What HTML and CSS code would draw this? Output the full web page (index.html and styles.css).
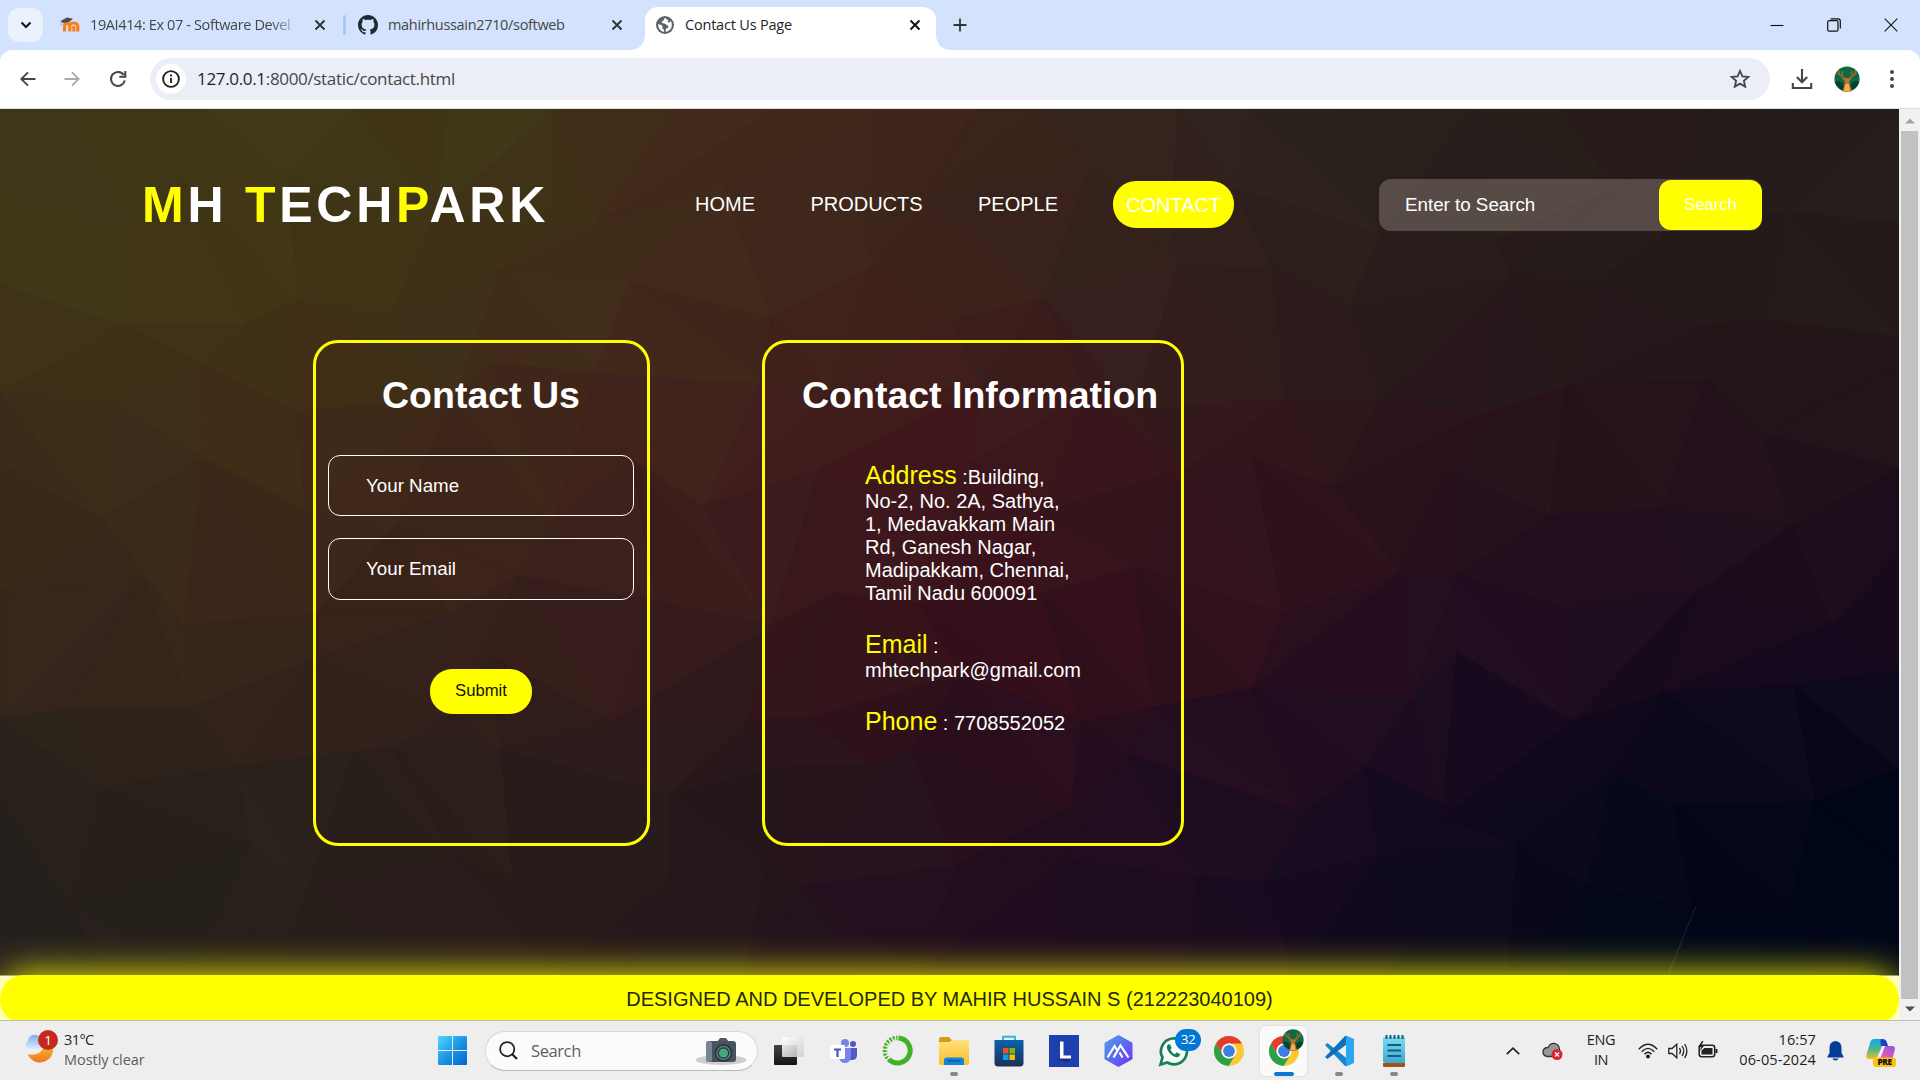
FILE: index.html
```html
<!DOCTYPE html>
<html lang="en">
<head>
<meta charset="utf-8">
<title>Contact Us Page</title>
<link rel="stylesheet" href="styles.css">
</head>
<body>
<svg class="defs" width="0" height="0" aria-hidden="true">
  <defs>
    <linearGradient id="win" x1="0" y1="0" x2="1" y2="1"><stop offset="0" stop-color="#4fd8ff"/><stop offset=".55" stop-color="#1a90e2"/><stop offset="1" stop-color="#0067cc"/></linearGradient>
    <linearGradient id="moon" x1="0" y1="0" x2="0" y2="1"><stop offset="0" stop-color="#f5c030"/><stop offset="1" stop-color="#ee7420"/></linearGradient>
    <linearGradient id="cloud" x1="0" y1="0" x2="0" y2="1"><stop offset="0" stop-color="#84aceb"/><stop offset="1" stop-color="#dbe8fb"/></linearGradient>
    <linearGradient id="folder" x1="0" y1="0" x2="0" y2="1"><stop offset="0" stop-color="#ffe07a"/><stop offset="1" stop-color="#fcbf2c"/></linearGradient>
    <linearGradient id="store" x1="0" y1="0" x2="0" y2="1"><stop offset="0" stop-color="#0c62ad"/><stop offset="1" stop-color="#1b3055"/></linearGradient>
    <linearGradient id="hex" x1="0" y1="0" x2="1" y2="1"><stop offset="0" stop-color="#4f9fe6"/><stop offset=".5" stop-color="#5a6cf0"/><stop offset="1" stop-color="#7b2ff5"/></linearGradient>
    <linearGradient id="note" x1="0" y1="0" x2="0" y2="1"><stop offset="0" stop-color="#7bdcf0"/><stop offset="1" stop-color="#3aa9d2"/></linearGradient>
    <linearGradient id="pilotA" x1="0" y1="0" x2="0" y2="1"><stop offset="0" stop-color="#18a5f0"/><stop offset=".5" stop-color="#45b88f"/><stop offset="1" stop-color="#f2c01c"/></linearGradient>
    <linearGradient id="pilotB" x1="1" y1="0" x2="0" y2="1"><stop offset="0" stop-color="#8f50e8"/><stop offset=".6" stop-color="#e65fae"/><stop offset="1" stop-color="#fa8a58"/></linearGradient>
    <linearGradient id="dark" x1="0" y1="0" x2="0" y2="1"><stop offset="0" stop-color="#454442"/><stop offset="1" stop-color="#141414"/></linearGradient>
    <linearGradient id="light" x1="0" y1="0" x2="1" y2="1"><stop offset="0" stop-color="#fff" stop-opacity=".95"/><stop offset="1" stop-color="#ccc" stop-opacity=".8"/></linearGradient>
    <symbol id="close" viewBox="0 0 12 12"><path d="M1.5 1.5l9 9M10.5 1.5l-9 9" fill="none" stroke="currentColor" stroke-width="1.9"/></symbol>
    <symbol id="chrome" viewBox="0 0 30 32">
      <circle cx="15" cy="16" r="15" fill="#fcc934"/>
      <path d="M2 8.5A15 15 0 0 1 28 8.5H15A7.5 7.5 0 0 0 8.5 19.8Z" fill="#e33b2e"/>
      <path d="M2 8.5A15 15 0 0 0 14.5 31L21.5 19.8A7.5 7.5 0 0 1 8.5 19.8Z" fill="#2aa04a"/>
      <circle cx="15" cy="16" r="7.5" fill="#fff"/><circle cx="15" cy="16" r="5.9" fill="#3f7de8"/>
    </symbol>
    <symbol id="deer" viewBox="0 0 26 26">
      <circle cx="13" cy="13" r="12.6" fill="#0d6b42"/>
      <path d="M1 16Q6 13 9 18L10 25Q3 22 1 16ZM25 16Q20 13 17 18L16 25Q23 22 25 16Z" fill="#063f2b"/>
      <path d="M11.5 12Q5 11 4.500 4M7 9.500Q4 8 3.500 7M8.500 10.800L8 5M14.500 12Q21 11 21.500 4M19 9.500Q22 8 22.500 7M17.500 10.800L18 5" fill="none" stroke="#b5622a" stroke-width="1.200"/>
      <path d="M8 12L11.500 12.500Q13 11.500 14.500 12.500L18 12L15.200 15.200L15.500 18L18 25Q13 26.500 8.500 25L10.700 18L10.800 15.200Z" fill="#c9702c"/>
      <path d="M11.500 18H14.800L16 25.200H10Z" fill="#f1b04c"/>
    </symbol>
  </defs>
</svg>

<header class="tabstrip">
  <div class="tab-search"><svg width="12" height="8" viewBox="0 0 12 8"><path d="M1.500 1.500L6 6l4.500-4.500" fill="none" stroke="#111" stroke-width="2"/></svg></div>
  <div class="tab tab-moodle">
    <svg width="20" height="16" viewBox="0 0 20 16"><path d="M4.500 14.500V9Q4.500 6.500 7 6.500T9.800 9V14.500M9.800 9Q9.800 6 13.500 6Q17.800 6 17.800 9.500V14.500M13.800 14.500V9" fill="none" stroke="#f98012" stroke-width="3.100"/><path d="M.5 4L7 .500L13 1.800L9 5L3 6Z" fill="#4b4b4b"/><path d="M1.300 4.500V9" stroke="#999" stroke-width=".8"/></svg>
    <span class="tab-title fade">19AI414: Ex 07 - Software Devel</span>
    <svg class="x" width="12" height="12"><use href="#close"/></svg>
  </div>
  <div class="divider"></div>
  <div class="tab tab-github">
    <svg width="20" height="20" viewBox="0 0 16 16"><path fill="#24292f" d="M8 0C3.580 0 0 3.580 0 8c0 3.540 2.290 6.530 5.470 7.590.4.070.55-.17.55-.38 0-.19-.01-.82-.01-1.490-2.010.37-2.530-.49-2.690-.94-.09-.23-.48-.94-.82-1.130-.28-.15-.68-.52-.01-.53.63-.01 1.080.58 1.230.82.720 1.210 1.870.87 2.330.66.070-.52.280-.87.510-1.070-1.780-.2-3.640-.89-3.640-3.950 0-.87.310-1.590.82-2.150-.08-.2-.36-1.020.08-2.120 0 0 .67-.21 2.200.82.640-.18 1.320-.27 2-.27s1.360.09 2 .27c1.530-1.040 2.200-.82 2.200-.82.44 1.100.16 1.920.08 2.120.51.560.82 1.270.82 2.150 0 3.070-1.870 3.750-3.650 3.950.29.250.54.730.54 1.480 0 1.070-.01 1.930-.01 2.200 0 .21.15.46.55.38A8.010 8.010 0 0 0 16 8c0-4.420-3.580-8-8-8z"/></svg>
    <span class="tab-title">mahirhussain2710/softweb</span>
    <svg class="x" width="12" height="12"><use href="#close"/></svg>
  </div>
  <div class="tab active">
    <svg width="18" height="18" viewBox="0 0 18 18"><circle cx="9" cy="9" r="9" fill="#5f6368"/><path d="M9.800 1.800Q7.500 2.500 7.800 4.300L5.800 5.500Q5.500 7.500 8 7.600L9.800 8Q10.300 9.600 12.400 9.700L12.200 11.800L9.900 12.700L9.500 15.800Q13.500 15.500 15.500 11.500Q16.500 8 15 5L13 6.800L11.500 5.800L12.600 4L10.400 3.500ZM2 8.200L5 8.800L6.800 10.800L6.200 12.600L8 13.800L7.800 16Q2.300 14.500 2 8.200Z" fill="#fff"/></svg>
    <span class="tab-title">Contact Us Page</span>
    <svg class="x" width="12" height="12"><use href="#close"/></svg>
  </div>
  <svg class="plus" width="14" height="14" viewBox="0 0 14 14"><path d="M7 .5v13M.5 7h13" stroke="#333" stroke-width="1.800"/></svg>
  <div class="window-buttons">
    <svg width="14" height="14" viewBox="0 0 14 14"><path d="M.5 7.500h13" stroke="#111" stroke-width="1.100"/></svg>
    <svg width="14" height="14" viewBox="0 0 14 14"><rect x=".7" y="2.700" width="10.300" height="10.500" rx="1.500" fill="none" stroke="#111" stroke-width="1.200"/><path d="M3.500 .8H11Q13.300 .8 13.300 3V10.500" fill="none" stroke="#111" stroke-width="1.200"/></svg>
    <svg width="14" height="14" viewBox="0 0 14 14"><path d="M.7 .7l12.600 12.600M13.300 .7L.7 13.300" stroke="#111" stroke-width="1.100"/></svg>
  </div>
</header>

<nav class="toolbar">
  <svg width="16" height="16" viewBox="0 0 16 16"><path d="M15.500 8H1.500M8 1.300L1.300 8L8 14.700" fill="none" stroke="#444746" stroke-width="1.900"/></svg>
  <svg width="16" height="16" viewBox="0 0 16 16"><path d="M.5 8h14M8 1.300L14.700 8L8 14.700" fill="none" stroke="#a9abae" stroke-width="1.900"/></svg>
  <svg width="18" height="18" viewBox="0 0 18 18"><path d="M14.800 5A7 7 0 1 0 15.800 10.500M16.300 1V6.800H10.300" fill="none" stroke="#444746" stroke-width="2"/></svg>
  <div class="omnibox">
    <div class="info"><svg width="18" height="18" viewBox="0 0 18 18"><circle cx="9" cy="9" r="7.900" fill="none" stroke="#222" stroke-width="1.900"/><path d="M9 8v5M9 4.500v2" stroke="#222" stroke-width="1.900"/></svg></div>
    <div class="url"><b>127.0.0.1</b>:8000/static/contact.html</div>
    <svg class="star" width="20" height="20" viewBox="0 0 20 20"><path d="M10 1.900L12.400 7.300L18.300 7.900L13.900 11.800L15.200 17.600L10 14.600L4.800 17.600L6.100 11.800L1.700 7.900L7.600 7.300Z" fill="none" stroke="#444746" stroke-width="1.800"/></svg>
  </div>
  <svg class="download" width="22" height="22" viewBox="0 0 22 22"><path d="M11 1v13M5.800 9L11 14.200L16.200 9M1.800 15V20H20.200V15" fill="none" stroke="#444746" stroke-width="2.100"/></svg>
  <svg class="avatar" width="26" height="26"><use href="#deer"/></svg>
  <svg class="dots" width="4" height="18" viewBox="0 0 4 18" fill="#444746"><circle cx="2" cy="2" r="2"/><circle cx="2" cy="9" r="2"/><circle cx="2" cy="16" r="2"/></svg>
</nav>

<div class="viewport">
  <div class="page">
    <main class="hero">
      <svg class="mesh" id="mesh" viewBox="0 0 1899 866" preserveAspectRatio="none"></svg>
      <div class="site-head">
        <h1 class="logo"><i>M</i>H <i>T</i>ECH<i>P</i>ARK</h1>
        <ul class="menu"><li>HOME</li><li>PRODUCTS</li><li>PEOPLE</li><li class="current">CONTACT</li></ul>
        <div class="search"><span>Enter to Search</span><div class="search-btn">Search</div></div>
      </div>
      <div class="cards">
        <section class="card form">
          <h2>Contact Us</h2>
          <div class="field">Your Name</div>
          <div class="field">Your Email</div>
          <div class="submit">Submit</div>
        </section>
        <section class="card details">
          <h2>Contact Information</h2>
          <p><em>Address</em> :Building,<br>No-2, No. 2A, Sathya,<br>1, Medavakkam Main<br>Rd, Ganesh Nagar,<br>Madipakkam, Chennai,<br>Tamil Nadu 600091</p>
          <p><em>Email</em> :<br>mhtechpark@gmail.com</p>
          <p><em>Phone</em> : 7708552052</p>
        </section>
      </div>
    </main>
    <footer class="site-foot">DESIGNED AND DEVELOPED BY MAHIR HUSSAIN S (212223040109)</footer>
  </div>
  <div class="scrollbar">
    <svg width="10" height="6" viewBox="0 0 10 6"><path d="M0 5.500L5 .5l5 5z" fill="#a3a3a3"/></svg>
    <div class="thumb"></div>
    <svg width="10" height="6" viewBox="0 0 10 6"><path d="M0 .5L5 5.500l5-5z" fill="#505050"/></svg>
  </div>
</div>

<div class="taskbar">
  <svg class="weather" width="36" height="36" viewBox="0 0 36 36">
    <path d="M4 25Q14 28 20 18.500L28.500 16Q31 22 26 29Q15 38 6 29Q4.500 27 4 25Z" fill="url(#moon)"/>
    <path d="M4 19.500A4.500 4.500 0 0 1 4 11.500A6.500 6.500 0 0 1 16 9Q20 11 20 15V19.500Z" fill="url(#cloud)"/>
    <circle cx="24" cy="11" r="10" fill="#c42b1c"/><text x="24" y="16" text-anchor="middle" font-family="Open Sans, sans-serif" font-size="13.500" fill="#fff">1</text>
  </svg>
  <div class="forecast"><span class="temp">31°C</span><span class="muted">Mostly clear</span></div>
  <svg class="start" width="29" height="29" viewBox="0 0 29 29"><path fill="url(#win)" d="M1 0H14V14H0V1Q0 0 1 0ZM15 0H28Q29 0 29 1V14H15ZM0 15H14V29H1Q0 29 0 28ZM15 15H29V28Q29 29 28 29H15Z"/></svg>
  <div class="task-search">
    <svg width="19" height="19" viewBox="0 0 19 19"><circle cx="8.200" cy="8.200" r="7.100" fill="none" stroke="#222" stroke-width="1.800"/><path d="M13 13l5 5" stroke="#222" stroke-width="2.300"/></svg>
    <span>Search</span>
    <svg class="camera" width="52" height="30" viewBox="0 0 52 30"><ellipse cx="26" cy="24" rx="25.500" ry="5" fill="#d3ccca"/><path d="M22 6L25 2H31L34 6Z" fill="#4b5a65"/><rect x="11" y="5" width="30" height="21" rx="3" fill="#46545f"/><rect x="11" y="5" width="6" height="21" rx="2.500" fill="#768590"/><circle cx="28.500" cy="17" r="9" fill="#2b3740"/><circle cx="28.500" cy="17" r="7.200" fill="#6a7983"/><circle cx="28.500" cy="17" r="5.800" fill="#163c34"/><circle cx="28.500" cy="17" r="4.600" fill="#46a878"/></svg>
  </div>
  <div class="apps">
    <div class="app"><svg width="30" height="30" viewBox="0 0 30 30"><rect y="9" width="23" height="20" rx="1" fill="url(#dark)"/><rect x="8" y="1" width="22" height="20" rx="1" fill="url(#light)"/></svg></div>
    <div class="app"><svg width="28" height="26" viewBox="0 0 28 26"><circle cx="15" cy="5" r="4" fill="#7b83eb"/><circle cx="23" cy="6" r="3" fill="#5059c9"/><path d="M18 10H27V17Q27 22 22 22H18Z" fill="#5059c9"/><path d="M10 10H21V18Q21 25 15 25T9 18Z" fill="#7b83eb"/><rect y="7" width="15" height="14" rx="1" fill="#fff"/><path d="M4 10.500H11V12.500H8.600V19H6.400V12.500H4Z" fill="#4b53bc"/></svg></div>
    <div class="app"><svg width="31" height="31" viewBox="0 0 31 31"><path d="M15.500 3A12.500 12.500 0 1 1 6 24.500" fill="none" stroke="#43b02a" stroke-width="5"/><path d="M7 25.500A12.500 12.500 0 0 1 14.500 3" fill="none" stroke="#43b02a" stroke-width="4.500" stroke-dasharray="2 1.300"/><path d="M6.500 23.500A11.500 11.500 0 0 1 13.500 4.500" fill="none" stroke="#eee" stroke-width="1.300" stroke-dasharray="2.500 1.600"/></svg></div>
    <div class="app open"><svg width="30" height="28" viewBox="0 0 30 28"><path d="M0 2Q0 0 2 0H10L13 3.500V8H0Z" fill="#d99a15"/><path d="M0 5H10L13.500 3H28.500Q30 3 30 4.500V26Q30 28 28 28H2Q0 28 0 26Z" fill="url(#folder)"/><path d="M5 28V23Q5 20.500 7.500 20.500H22.500Q25 20.500 25 23V28Z" fill="#1584d8"/><rect x="8.500" y="23" width="13" height="1.600" fill="#0b5aa8"/></svg></div>
    <div class="app"><svg width="30" height="32" viewBox="0 0 30 32"><path d="M9 6V1.800H21V6" fill="none" stroke="#2cb6ef" stroke-width="2"/><path d="M.5 5H29.500V28Q29.500 31.500 26 31.500H4Q.5 31.500 .5 28Z" fill="url(#store)"/><path d="M9 13h5.500v5.500H9z" fill="#f25022"/><path d="M15.500 13H21v5.500h-5.500z" fill="#7fba00"/><path d="M9 19.500h5.500V25H9z" fill="#00a4ef"/><path d="M15.500 19.500H21V25h-5.500z" fill="#ffb900"/></svg></div>
    <div class="app"><svg width="30" height="32" viewBox="0 0 30 32"><path d="M0 0H30V32H0Z" fill="#1e3fae"/><path d="M8 25L11 23.500H22L19 27Z" fill="#15307f"/><path d="M11 6.500H14.500V20.500H22V23.500H11Z" fill="#fff"/></svg></div>
    <div class="app"><svg width="29" height="32" viewBox="0 0 29 32"><path d="M14.500 .5L28 8V24L14.500 31.500L1 24V8Z" fill="url(#hex)" stroke="url(#hex)" stroke-linejoin="round"/><path d="M3.500 22.500L10.500 11L13 15M9.500 22.500L16.500 10.500L24.500 22.500M15.500 17.500L18.500 22.500" fill="none" stroke="#fff" stroke-width="2.200"/></svg></div>
    <div class="app"><svg width="31" height="32" viewBox="0 0 31 32"><path d="M2.500 29.500L4.500 22.500A13 13 0 1 1 9.300 27.500Z" fill="#f6fbf8" stroke="#1c7d54" stroke-width="2.700"/><path d="M10 9.500Q8 11.500 9.500 15Q12.500 20.500 18 22.300Q21 22.500 22.500 19.500L18.800 17.300L17 19.200Q14 18 12.300 14.700L13.700 13L12 9.300Z" fill="#1c7d54"/></svg><span class="count">32</span></div>
    <div class="app"><svg width="30" height="32"><use href="#chrome"/></svg></div>
    <div class="app current"><svg width="30" height="32"><use href="#chrome"/></svg><svg class="who" width="22" height="22"><use href="#deer"/></svg></div>
    <div class="app open"><svg width="30" height="32" viewBox="0 0 30 32"><path d="M1 10L3.500 8L23 23.500V31L21 31Z" fill="#1a83cf"/><path d="M1 22L3.500 24L23 9V1L21 1Z" fill="#0f6fb8"/><path d="M22 .5L30 4V28L22 31.500V23.500V9Z" fill="#2aa7f2"/></svg></div>
    <div class="app open"><svg width="24" height="32" viewBox="0 0 24 32"><path d="M1 28H23V31Q23 32 22 32H2Q1 32 1 31Z" fill="#a4521c"/><path d="M1 2H23V28H3Q1 28 1 26Z" fill="url(#note)"/><path d="M4.500 0V4M8.500 0V4M12.500 0V4M16.500 0V4M20.500 0V4" stroke="#155c78" stroke-width="2"/><path d="M5.500 10H19M5.500 15.500H19M5.500 21H19" stroke="#0f5d80" stroke-width="2"/></svg></div>
  </div>
  <div class="tray">
    <svg width="14" height="8" viewBox="0 0 14 8"><path d="M.8 7.200L7 1.200l6.200 6" fill="none" stroke="#222" stroke-width="1.700"/></svg>
    <svg class="onedrive" width="22" height="18" viewBox="0 0 22 18"><path d="M5 14.500Q.8 13.500 1 9.500Q1.500 5.500 6 5.500Q8.500 .7 13 1.500Q17.500 3 17.500 8L10 14.500Z" fill="#999" stroke="#333" stroke-width="1.300"/><circle cx="15" cy="12.500" r="5.500" fill="#d9232e"/><path d="M13 10.500l4 4M17 10.500l-4 4" stroke="#fff" stroke-width="1.300"/></svg>
    <div class="lang"><span>ENG</span><span>IN</span></div>
    <svg class="wifi" width="20" height="16" viewBox="0 0 20 16" fill="none" stroke="#222" stroke-width="1.400"><path d="M.7 6.200Q10-3.800 19.300 6.200M3.700 8.800Q10 2 16.300 8.800M6.500 11.300Q10 7.300 13.500 11.300"/><circle cx="10" cy="13.500" r="1.300" fill="#222"/></svg>
    <svg class="sound" width="20" height="16" viewBox="0 0 20 16" fill="none" stroke="#222" stroke-width="1.300"><path d="M.8 5.500H4L8.800 1.200V14.800L4 10.500H.8ZM11.500 5Q13.500 8 11.500 11M14 3Q17.500 8 14 13M16.600 1Q21.200 8 16.600 15"/></svg>
    <svg class="battery" width="20" height="17" viewBox="0 0 20 17"><rect x="1.200" y="4.200" width="15.500" height="11.500" rx="2.500" fill="none" stroke="#222" stroke-width="1.500"/><path d="M3.500 13.500V9.500L6.500 7H14.500V13.500Z" fill="#222"/><path d="M17.500 8H19.500V12H17.500ZM4 0L0 6H3L2 10L6.500 4H3.500L5.500 0Z" fill="#222"/></svg>
    <div class="clock"><span>16:57</span><span>06-05-2024</span></div>
    <svg class="bell" width="17" height="20" viewBox="0 0 17 20"><path d="M8.500 0Q14.500 .5 14.500 7V12L16.500 15.500V16.500H.5V15.500L2.500 12V7Q2.500 .5 8.500 0ZM5.500 17.500H11.500Q11 19.500 8.500 19.500T5.500 17.500Z" fill="#023f94"/></svg>
    <svg class="copilot" width="30" height="29" viewBox="0 0 30 29"><path d="M8 1H17Q20 1 21 5L22 8H17L13 18Q12 21 9 21H3Q-1 21 1 15L4 5Q5 1 8 1Z" fill="url(#pilotA)"/><path d="M15 1Q20 1 21 5L22 8H15Q14 3 15 1Z" fill="#1747c0"/><path d="M22 27H12Q9 26 11 21L14 12Q15 8 18 8H26Q30 8 28.500 13L26 22Z" fill="url(#pilotB)"/><path d="M16 8H19L14 21H10.500Z" fill="#f1eef8"/><rect x="7" y="19.500" width="23" height="9.500" rx="3" fill="#ffc20e"/><text x="18.500" y="27.300" text-anchor="middle" font-family="Open Sans, sans-serif" font-size="8.300" font-weight="800" fill="#111">PRE</text></svg>
  </div>
</div>
<script src="mesh.js"></script>
</body>
</html>
```
FILE: styles.css
```css
* { box-sizing: border-box; }
body { margin: 0; width: 1920px; height: 1080px; overflow: hidden; display: flex; flex-direction: column; font-family: "Open Sans", "Noto Sans", sans-serif; background: #fff; color: #1f1f1f; }
svg { display: block; flex: none; overflow: visible; }
.defs { position: absolute; }

/* browser tabs */
.tabstrip { height: 62px; margin-bottom: -12px; padding: 0 22px 12px 8px; display: flex; align-items: center; background: #d3e2fd; flex: none; }
.tab-search { width: 35px; height: 34px; border-radius: 11px; background: #ebf1fd; display: flex; align-items: center; justify-content: center; }
.tab { display: flex; align-items: center; font-size: 14.500px; line-height: 20px; color: #474747; white-space: nowrap; }
.tab-title { margin-left: 10px; letter-spacing: -.33px; }
.x { margin-left: auto; color: #333; }
.tab-moodle { width: 266px; margin-left: 17px; }
.tab-moodle .tab-title { width: 210px; letter-spacing: -.38px; }
.fade { mask-image: linear-gradient(90deg, #000 86%, transparent); }
.divider { width: 3px; height: 20px; margin: 0 12px 0 17px; border-radius: 2px; background: #a8c7fa; }
.tab-github { width: 265px; }
.active { position: relative; align-self: flex-end; width: 291px; height: 43px; margin-left: 22px; padding: 0 15px 7px 11px; background: #fff; border-radius: 13px 13px 0 0; color: #1f1f1f; }
.active .tab-title { margin-left: 11px; letter-spacing: -.2px; }
.active .x { color: #111; }
.active::before, .active::after { content: ""; position: absolute; bottom: 0; width: 14px; height: 14px; }
.active::before { left: -14px; background: radial-gradient(circle at 0 0, transparent 13.500px, #fff 14px); }
.active::after { right: -14px; background: radial-gradient(circle at 100% 0, transparent 13.500px, #fff 14px); }
.plus { margin-left: 17px; }
.window-buttons { margin-left: auto; display: flex; gap: 43px; }

.toolbar { position: relative; height: 58px; padding: 0 26px 0 20px; display: flex; align-items: center; background: #fff; border-radius: 12px 12px 0 0; flex: none; }
.toolbar > svg:nth-child(2) { margin-left: 28px; }
.toolbar > svg:nth-child(3) { margin-left: 29px; }
.omnibox { width: 1620px; height: 42px; margin-left: 23px; padding: 0 20px 0 6px; border-radius: 21px; background: #ebeef7; display: flex; align-items: center; }
.info { width: 30px; height: 30px; border-radius: 50%; background: #fff; display: flex; align-items: center; justify-content: center; }
.url { margin-left: 11px; font-size: 17px; line-height: 22px; letter-spacing: -.33px; color: #474747; }
.url b { font-weight: 400; color: #1f1f1f; }
.star { margin-left: auto; }
.download { margin-left: 21px; }
.avatar { margin-left: 21px; }
.dots { margin-left: 30px; }

/* web page */
.viewport { display: flex; height: 912px; border-top: 1px solid #dcdfe0; flex: none; }
.page { width: 1899px; height: 911px; overflow: hidden; font-family: "Liberation Sans", Arial, sans-serif; background: #fff; }
.hero { position: relative; height: 866px; background: #2c1a1a; color: #fff; }
.mesh { position: absolute; inset: 0; width: 100%; height: 100%; }
.site-head { position: relative; display: flex; align-items: center; height: 191px; padding-left: 142px; }
.logo { margin: 0; width: 553px; font-size: 50px; line-height: 58px; letter-spacing: 3.750px; white-space: nowrap; }
.logo i { font-style: normal; color: #ff0; }
.menu { display: flex; align-items: center; gap: 55.400px; width: 684px; margin: 0; padding: 0; list-style: none; font-size: 20px; }
.menu .current { height: 47px; padding: 1px 12.500px 0; line-height: 46px; border-radius: 23px; background: #ff0; }
.search { display: flex; align-items: center; justify-content: space-between; width: 383px; height: 52px; padding-left: 26px; border-radius: 12px; background: rgba(255,235,225,.22); font-size: 18.750px; }
.search-btn { width: 103px; height: 50px; border-radius: 12px; background: #ff0; font-size: 16.670px; line-height: 50px; text-align: center; }
.cards { position: relative; display: flex; gap: 112px; margin: 40px 0 0 313px; }
.card { height: 506px; border: 3px solid #ff0; border-radius: 25px; }
.card h2 { margin: 0; font-size: 37.500px; line-height: 42px; text-align: center; white-space: nowrap; }
.form { width: 337px; padding: 31px 13px 0 12px; display: flex; flex-direction: column; }
.field { height: 62px; padding-left: 37px; border: 1px solid #fff; border-radius: 12px; font-size: 18.750px; line-height: 59px; margin-top: 22px; }
h2 + .field { height: 61px; margin-top: 39px; }
.submit { align-self: center; width: 102px; height: 45px; margin-top: 69px; border-radius: 22px; background: #ff0; color: #111; font-size: 16.670px; line-height: 43px; text-align: center; }
.details { width: 422px; padding: 31px 23px 0 37px; }
.details p { margin: 0 0 25px 63px; font-size: 20px; line-height: 23px; white-space: nowrap; }
.details h2 + p { margin-top: 45px; }
.details em { font-style: normal; font-size: 25px; line-height: 29px; color: #ff0; }
.site-foot { position: relative; height: 49px; border-radius: 25px; background: #ff0; box-shadow: 0 0 37px #ff0; color: #222a12; font-size: 20px; line-height: 48px; text-align: center; }
.scrollbar { width: 21px; padding: 9px 0 8px 2px; display: flex; flex-direction: column; background: #f1f1f1; justify-content: space-between; }
.scrollbar svg { margin-left: 4px; }
.thumb { width: 17px; height: 868px; background: #c1c1c1; }

/* taskbar */
.taskbar { height: 60px; border-top: 1px solid #bdbdbd; background: #eee; display: flex; align-items: center; font-size: 14.500px; line-height: 20px; letter-spacing: -.4px; flex: none; }
.weather { margin: -8px 0 0 24px; }
.forecast { display: flex; flex-direction: column; margin: -2px 0 0 4px; width: 374px; }
.temp { letter-spacing: -.6px; }
.muted { color: #5c5c5c; letter-spacing: -.05px; }
.task-search { display: flex; align-items: center; width: 273px; height: 40px; margin-left: 18px; padding: 0 10px 0 14px; border: 1px solid #d8d8d8; border-bottom-color: #bbb; border-radius: 20px; background: #fbfbfb; color: #606060; font-size: 16.500px; }
.task-search > svg { margin-left: -1px; }
.task-search span { margin-left: 13px; }
.task-search .camera { margin-left: auto; }
.apps { display: flex; margin-left: 3px; height: 50px; }
.app { position: relative; width: 55px; display: flex; align-items: center; justify-content: center; }
.app.current { width: 47px; margin: 0 4px; border-radius: 6px; background: #fafafa; box-shadow: 0 0 1px 1px #e2e2e2; }
.app.open::after, .app.current::after { content: ""; position: absolute; bottom: 0; width: 8px; height: 4px; border-radius: 2px; background: #888; }
.app.current::after { width: 20px; background: #0f75d4; }
.count { position: absolute; left: 29px; top: 3px; width: 26px; height: 22px; border-radius: 11px; background: #0078d4; color: #fff; font-size: 13.500px; line-height: 21px; text-align: center; }
.who { position: absolute; right: 3px; top: 3px; }
.tray { display: flex; align-items: center; margin-left: 85px; }
.onedrive { margin-left: 22px; }
.lang { display: flex; flex-direction: column; align-items: center; width: 30px; margin: -1px 0 0 22px; }
.wifi { margin-left: 22px; }
.sound { margin-left: 10px; }
.battery { margin: -2px 0 0 10px; }
.clock { display: flex; flex-direction: column; align-items: flex-end; width: 98px; margin-top: -2px; letter-spacing: .1px; }
.bell { margin-left: 11px; }
.copilot { margin: 3px 0 0 22px; }
```
FILE: mesh.js
```
// Low-poly backdrop: a jittered triangle grid coloured from a coarse palette.
const palette = [
  ["3c3619", "403818", "3f3717", "42291b", "3d261b", "32241d", "27211b", "281d1a", "241e19"],
  ["3f3517", "403515", "403117", "40281a", "3d221b", "31201c", "271c1b", "251a1a", "241b18"],
  ["3a2d19", "402c18", "40271a", "40201c", "40161b", "35171c", "2b131b", "24121b", "20121a"],
  ["34261a", "38251a", "38211b", "36191b", "38101b", "31101c", "240d1f", "1d0b1f", "170a1e"],
  ["27211a", "2a221a", "2a1e1b", "25191b", "280f1d", "1f0c1f", "150a20", "060819", "000518"],
  ["241f1f", "27201c", "291c1a", "25171c", "200d20", "1a0a1e", "0a0a1b", "000718", "000518"]
].map(row => row.map(h => [0, 2, 4].map(i => parseInt(h.slice(i, i + 2), 16))));

const W = 1899, H = 866, cols = 18, rows = 9;
let seed = 41;
const rand = () => (seed = (seed * 16807) % 2147483647) / 2147483647;

function colourAt(x, y) {
  const u = Math.min(7.999, Math.max(0, x / W * 8)), v = Math.min(4.999, Math.max(0, y / H * 5));
  const i = Math.floor(u), j = Math.floor(v), a = u - i, b = v - j;
  return [0, 1, 2].map(k =>
    (palette[j][i][k] * (1 - a) + palette[j][i + 1][k] * a) * (1 - b) +
    (palette[j + 1][i][k] * (1 - a) + palette[j + 1][i + 1][k] * a) * b);
}

const pts = [];
for (let r = 0; r <= rows; r++) {
  pts.push([]);
  for (let c = 0; c <= cols; c++) {
    const edgeX = c === 0 || c === cols, edgeY = r === 0 || r === rows;
    pts[r].push([
      c * W / cols + (edgeX ? 0 : (rand() - .5) * 80),
      r * H / rows + (edgeY ? 0 : (rand() - .5) * 75)
    ]);
  }
}

let out = "";
function face(a, b, c) {
  const n = (rand() - .5) * 2;
  const rgb = colourAt((a[0] + b[0] + c[0]) / 3, (a[1] + b[1] + c[1]) / 3).map(v => Math.round(Math.max(0, v + n)));
  const fill = "rgb(" + rgb + ")";
  out += `<polygon points="${a} ${b} ${c}" fill="${fill}" stroke="${fill}" stroke-width="1"/>`;
}
for (let r = 0; r < rows; r++) for (let c = 0; c < cols; c++) {
  const [p, q, s, t] = [pts[r][c], pts[r][c + 1], pts[r + 1][c], pts[r + 1][c + 1]];
  if (rand() > .5) { face(p, q, s); face(q, t, s); } else { face(p, q, t); face(p, t, s); }
}
document.getElementById("mesh").innerHTML = out + '<path d="M1696 797L1668 866" stroke="#fff" stroke-opacity=".1"/>';
```
